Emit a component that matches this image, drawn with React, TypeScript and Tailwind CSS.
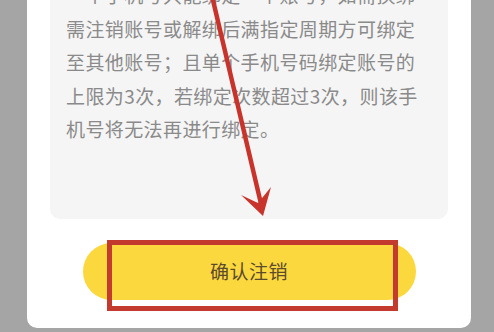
export default function App() {
  const lines = [
    '一个手机号只能绑定一个账号，如需换绑',
    '需注销账号或解绑后满指定周期方可绑定',
    '至其他账号；且单个手机号码绑定账号的',
    '上限为3次，若绑定次数超过3次，则该手',
    '机号将无法再进行绑定。',
  ];

  return (
    <div
      className="relative w-[494px] h-[332px] overflow-hidden bg-[#a5a5a5]"
      style={{ fontFamily: '"Noto Sans CJK SC", "Noto Sans", sans-serif' }}
    >
      {/* 弹窗卡片 */}
      <div className="ml-[27px] w-[444px] h-[328px] bg-white rounded-b-[10px] px-[23px] flex flex-col items-center">
        <div className="w-full h-[219px] shrink-0 bg-[#f5f5f5] rounded-b-[10px] overflow-hidden pl-[16px]">
          <div className="-mt-[22px] text-[19px] leading-[33.5px] tracking-[0.4px] text-[#8a8a8a] whitespace-nowrap">
            {lines.map((l) => (
              <div key={l}>{l}</div>
            ))}
          </div>
        </div>
        <button className="mt-[24px] w-[333px] h-[57px] rounded-full bg-[#fcd83f] text-[19px] tracking-[0.5px] text-[#5b4a2c] flex items-center justify-center">
          确认注销
        </button>
      </div>

      {/* 红框标注 */}
      <div className="absolute left-[107px] top-[240px] w-[291px] h-[71px] border-[5px] border-[#c33a2e]" />

      {/* 红色箭头 */}
      <svg className="absolute left-0 top-0" width="494" height="332" viewBox="0 0 494 332">
        <path d="M212 -4 L262 208" stroke="#c8342c" strokeWidth="4.5" strokeLinecap="round" fill="none" />
        <path d="M263 216 L241 195 L258 203 L271 187 Z" fill="#c8342c" />
      </svg>
    </div>
  );
}
